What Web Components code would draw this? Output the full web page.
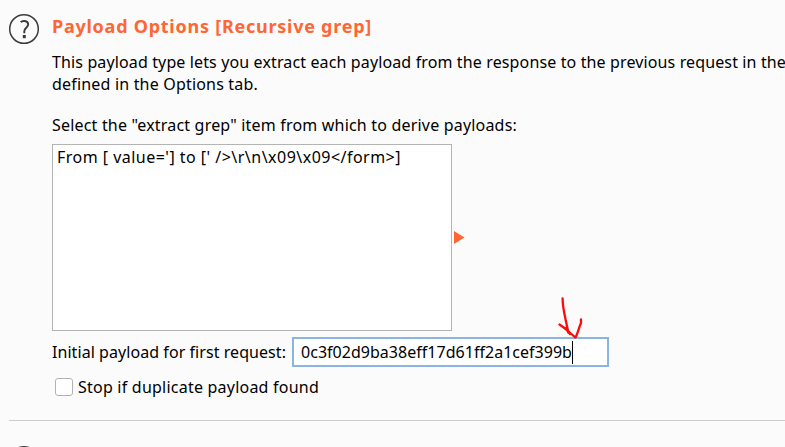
<!DOCTYPE html>
<html lang="en">
<head>
<meta charset="utf-8">
<title>Payload Options</title>
<style>
html, body { margin: 0; width: 785px; height: 447px; overflow: hidden; background: #fbfbfb; }
</style>
</head>
<body>
<payload-options></payload-options>
<script>
// One line of text, tracked so that it fills the width given in its "fit" attribute.
class FitText extends HTMLElement {
  connectedCallback() {
    const root = this.attachShadow({ mode: 'open' });
    root.innerHTML = `<style>
      :host { display: block; height: 22px; line-height: 22px; white-space: pre; }
      span { display: inline-block; }
    </style><span></span>`;
    const span = root.querySelector('span');
    span.textContent = this.getAttribute('text');
    const n = span.textContent.length;
    const w = span.getBoundingClientRect().width;
    span.style.letterSpacing = ((this.getAttribute('fit') - w) / n) + 'px';
  }
}
customElements.define('fit-text', FitText);

class HelpIcon extends HTMLElement {
  constructor() {
    super();
    this.attachShadow({ mode: 'open' }).innerHTML = `<style>
      :host { display: block; width: 32px; height: 32px; }
      svg { display: block; }
    </style>
    <svg width="32" height="32" viewBox="0 0 32 32" fill="none" stroke="#3c3c3c">
      <circle cx="16" cy="16" r="14.3" stroke-width="1.5"/>
      <path d="M12.7 9.2C14 7.6 19.9 7 20.2 11.2C20.4 14.5 16.3 15 16.3 18.2V20.2" stroke-width="1.9"/>
      <path d="M16.3 22V25.2" stroke-width="3"/>
    </svg>`;
  }
}
customElements.define('help-icon', HelpIcon);

class ItemList extends HTMLElement {
  constructor() {
    super();
    this.attachShadow({ mode: 'open' }).innerHTML = `<style>
      :host { display: block; box-sizing: border-box; width: 400px; height: 187px;
        border: 1px solid #b4b4b4; background: #fff; padding: 1px 4px; }
    </style><slot></slot>`;
  }
}
customElements.define('item-list', ItemList);

class TextInput extends HTMLElement {
  constructor() {
    super();
    this.attachShadow({ mode: 'open' }).innerHTML = `<style>
      :host { display: flex; box-sizing: border-box; width: 317px; height: 30px;
        border: 2px solid #8ab4e2; background: #fff; padding: 2px 0 0 7px; }
      i { width: 1px; height: 23px; background: #000; }
    </style><slot></slot><i></i>`;
  }
}
customElements.define('text-input', TextInput);

class CheckOption extends HTMLElement {
  constructor() {
    super();
    this.attachShadow({ mode: 'open' }).innerHTML = `<style>
      :host { display: flex; gap: 5px; height: 22px; }
      i { box-sizing: border-box; width: 18px; height: 18px; margin-top: 2px;
        border: 1.5px solid #b2b2b2; border-radius: 3px; background: #fff; }
    </style><i></i><slot></slot>`;
  }
}
customElements.define('check-option', CheckOption);

// Hand-drawn red arrow that lies over the page.
class RedArrow extends HTMLElement {
  constructor() {
    super();
    this.attachShadow({ mode: 'open' }).innerHTML = `<style>
      :host { position: absolute; left: 550px; top: 290px; }
      svg { display: block; }
    </style>
    <svg width="40" height="56" viewBox="0 0 40 56" fill="none" stroke="#ff0a0a" stroke-width="2.3" stroke-linecap="round" stroke-linejoin="round">
      <path d="M12.6 8.5C12.5 19 16 30 18.3 42.5"/>
      <path d="M9.5 34.5C15 38 20 43 25.5 47.5C28 43 29 37 31 33V29.5"/>
      <path d="M16 38L20 44"/>
    </svg>`;
  }
}
customElements.define('red-arrow', RedArrow);

class PayloadOptions extends HTMLElement {
  constructor() {
    super();
    this.attachShadow({ mode: 'open' }).innerHTML = `<style>
      :host { display: flex; flex-direction: column; position: relative; box-sizing: border-box;
        width: 785px; height: 447px; overflow: hidden; background: #fbfbfb; color: #000;
        font: 16px "Noto Sans", "Open Sans", sans-serif; }
      .section { display: grid; grid-template-columns: 44px 1fr; height: 420px; flex: none; padding-left: 8px; box-sizing: border-box; }
      help-icon { margin-top: 13px; }
      .body { display: flex; flex-direction: column; padding-top: 15px; }
      .title { font-size: 18px; font-weight: 700; color: #ff6633; margin-bottom: 14px; }
      .prompt { margin: 19px 0 8px; }
      .pick { display: flex; align-items: center; gap: 2px; }
      .row { display: flex; align-items: center; margin-top: 6px; gap: 6px; }
      check-option { margin: 9px 0 0 3px; }
      hr { flex: none; width: 776px; height: 1px; border: 0; margin: 0 0 0 9px; background: #cecece; }
      .next { margin: 24px 0 0 8px; flex: none; }
    </style>
    <div class="section">
      <help-icon></help-icon>
      <div class="body">
        <fit-text class="title" fit="320" text="Payload Options [Recursive grep]"></fit-text>
        <fit-text fit="734" text="This payload type lets you extract each payload from the response to the previous request in the"></fit-text>
        <fit-text fit="206" text="defined in the Options tab."></fit-text>
        <fit-text class="prompt" fit="465" text='Select the "extract grep" item from which to derive payloads:'></fit-text>
        <div class="pick">
          <item-list><fit-text fit="344" text="From [ value='] to [' />\\r\\n\\x09\\x09&lt;/form&gt;]"></fit-text></item-list>
          <svg width="11" height="13" viewBox="0 0 11 13"><path d="M0 0L10.5 6.5L0 13Z" fill="#ff6633"/></svg>
        </div>
        <div class="row">
          <fit-text fit="234" text="Initial payload for first request:"></fit-text>
          <text-input><fit-text fit="271" text="0c3f02d9ba38eff17d61ff2a1cef399b"></fit-text></text-input>
        </div>
        <check-option><fit-text fit="241" text="Stop if duplicate payload found"></fit-text></check-option>
      </div>
    </div>
    <hr>
    <help-icon class="next"></help-icon>
    <red-arrow></red-arrow>`;
  }
}
customElements.define('payload-options', PayloadOptions);
</script>
</body>
</html>
